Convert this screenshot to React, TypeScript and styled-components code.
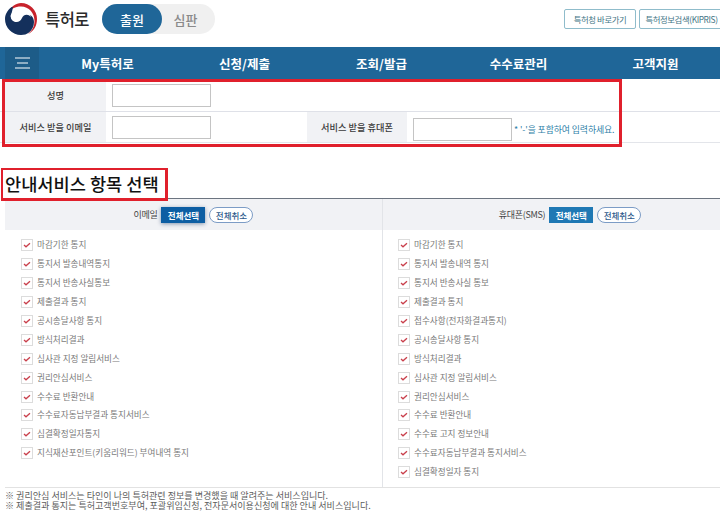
import React from "react";
import styled, { createGlobalStyle } from "styled-components";

const GlobalStyle = createGlobalStyle`
  html, body {
    margin: 0;
    padding: 0;
    background: #fff;
    overflow: hidden;
  }
  * {
    box-sizing: border-box;
  }
  body {
    font-family: "Noto Sans CJK KR", "Noto Sans", sans-serif;
    color: #333;
  }
`;

const Page = styled.div`
  width: 720px;
  height: 518px;
  overflow: hidden;
`;

const Header = styled.header`
  height: 47px;
  display: flex;
  align-items: flex-start;
  padding: 3px 0 0 5px;
`;

const Brand = styled.div`
  display: flex;
  align-items: center;
  gap: 8px;
  width: 97px;
  height: 32px;
  font-size: 16.5px;
  font-weight: 500;
  color: #2b2b2b;
  letter-spacing: -0.5px;
`;

const Toggle = styled.div`
  display: flex;
  width: 113px;
  height: 30px;
  margin-top: 1px;
  border-radius: 15px;
  background: #f0f0f0;
`;

const ToggleItem = styled.div<{ $active?: boolean }>`
  width: ${(p) => (p.$active ? "60px" : "53px")};
  display: flex;
  align-items: center;
  justify-content: center;
  border-radius: 15px;
  font-size: 13px;
  font-weight: 500;
  padding-right: ${(p) => (p.$active ? "0" : "6px")};
  background: ${(p) => (p.$active ? "#1f6698" : "transparent")};
  color: ${(p) => (p.$active ? "#fff" : "#8a8a8a")};
`;

const QuickLinks = styled.div`
  margin-left: auto;
  display: flex;
  gap: 3px;
  padding-top: 6px;
  margin-right: -4px;
`;

const QuickLink = styled.a<{ $w: number }>`
  width: ${(p) => p.$w}px;
  height: 20px;
  display: flex;
  align-items: center;
  justify-content: center;
  border: 1px solid #8fbccb;
  border-radius: 2px;
  font-size: 8.4px;
  letter-spacing: -0.4px;
  color: #3f7585;
  white-space: nowrap;
`;

const Nav = styled.nav`
  height: 32px;
  background: #1f6698;
  display: flex;
  padding-left: 5px;
`;

const MenuButton = styled.div`
  width: 34px;
  flex: none;
  background: #1d5c88;
  display: flex;
  align-items: center;
  justify-content: center;
`;

const NavItem = styled.div`
  width: 137px;
  flex: none;
  display: flex;
  align-items: center;
  justify-content: center;
  color: #fff;
  font-size: 12.5px;
  font-weight: 700;
`;

const FormSection = styled.section`
  position: relative;
  height: 64px;
  border-bottom: 1px solid #e3e5ea;
`;

const FormRow = styled.div<{ $h: number; $line?: boolean }>`
  height: ${(p) => p.$h}px;
  display: flex;
  padding-left: 5px;
  border-bottom: ${(p) => (p.$line ? "1px solid #dfe1e8" : "none")};
`;

const Label = styled.div<{ $w: number }>`
  width: ${(p) => p.$w}px;
  flex: none;
  background: #f1f2f5;
  display: flex;
  align-items: center;
  justify-content: center;
  font-size: 9.2px;
  font-weight: 500;
  color: #3a3a3a;
  white-space: nowrap;
`;

const Field = styled.div<{ $w: number; $drop?: boolean }>`
  width: ${(p) => p.$w}px;
  flex: none;
  display: flex;
  align-items: center;
  padding-left: 6px;
  padding-top: ${(p) => (p.$drop ? "4px" : "0")};
`;

const Input = styled.input`
  width: 99px;
  height: 23px;
  border: 1px solid #c4c4c4;
  background: #fff;
  padding: 0;
  outline: none;
`;

const Hint = styled.span`
  margin-left: 2px;
  font-size: 8.9px;
  letter-spacing: -0.1px;
  color: #2f7fa8;
  white-space: nowrap;
`;

const Highlight = styled.div`
  position: absolute;
  left: 2px;
  top: 0;
  width: 620px;
  height: 68px;
  border: 3px solid #e0202c;
  pointer-events: none;
`;

const TitleRow = styled.div`
  height: 56px;
  padding: 25px 0 0 1px;
`;

const Title = styled.h2`
  display: inline-flex;
  align-items: center;
  width: 167px;
  height: 33px;
  margin: 0;
  padding-left: 2px;
  border: 2px solid #e0202c;
  border-width: 2px 3px 3px 2px;
  background: #fff;
  position: relative;
  font-size: 17.6px;
  font-weight: 500;
  line-height: 1;
  color: #111;
  white-space: nowrap;
`;

const Board = styled.div`
  margin: -1px 0 0 5px;
  width: 752px;
  height: 290px;
  border-top: 1px solid #6c7480;
  border-bottom: 1px solid #e2e2e2;
  display: grid;
  grid-template-columns: 377px 375px;
`;

const Column = styled.div<{ $divided?: boolean }>`
  border-left: ${(p) => (p.$divided ? "1px solid #e2e4e8" : "none")};
`;

const ColumnHead = styled.div`
  height: 31px;
  background: #f1f2f5;
  display: flex;
  align-items: center;
  justify-content: center;
  gap: 3px;
  font-size: 9px;
  color: #444;
`;

const HeadLabel = styled.span`
  letter-spacing: -0.3px;
  margin-right: 1px;
`;

const SelectAll = styled.button<{ $shadow?: boolean }>`
  width: 44px;
  height: 16px;
  border: none;
  padding: 0;
  background: ${(p) => (p.$shadow ? "#0d5ea3" : "#1f78b4")};
  box-shadow: ${(p) => (p.$shadow ? "0 1px 4px rgba(0, 40, 90, 0.45)" : "none")};
  color: #fff;
  font-family: inherit;
  font-size: 8.5px;
  font-weight: 700;
`;

const ClearAll = styled.button`
  width: 44px;
  height: 16px;
  margin-left: 1px;
  border: 1px solid #7c9cc6;
  border-radius: 8px;
  padding: 0;
  background: #fff;
  color: #2e5a8c;
  font-family: inherit;
  font-size: 8.5px;
  font-weight: 500;
`;

const OptionList = styled.ul<{ $indent: number }>`
  list-style: none;
  margin: 0;
  padding: 5px 0 0 ${(p) => p.$indent}px;
`;

const Option = styled.li`
  height: 18.9px;
  display: flex;
  align-items: center;
  gap: 4px;
  font-size: 8.6px;
  color: #7a7a7a;
  white-space: nowrap;
`;

const CheckBox = styled.span`
  width: 12px;
  height: 12px;
  flex: none;
  border: 1px solid #dcdcdc;
  display: flex;
  align-items: center;
  justify-content: center;
  margin-top: 2px;
`;

const Notes = styled.div`
  margin-left: 5px;
  padding-top: 3px;
  font-size: 9.05px;
  line-height: 10px;
  color: #5c5c5c;
  white-space: nowrap;
`;

const Logo = () => (
  <svg width="32" height="32" viewBox="0 0 32 32" aria-hidden="true">
    <path d="M16 0a16 16 0 0 1 16 16c0 7-3.5 12.5-9 15 4-3 6.5-7.5 6.5-13C29.500 10 24 3.500 16 3.500 10 3.500 6 6 3.500 9 6 3.500 11 0 16 0z" fill="#c8232c" />
    <path d="M8.500 3c-5 2.500-8.500 7.500-8.500 13a16 16 0 0 0 16 16c3 0 6-.8 8-2.500 3-2.200 5-6 5-10.500 0-5-3.500-8-7.500-8-3.500 0-5.500 2-6.500 4.500-1 2-2.500 3-4.500 3-2.500 0-4.500-2-4.500-4.500 0-4 2-7 2-11z" fill="#14305c" />
    <path d="M5.500 13c.5 3.500 3 6 6 6 2.500 0 4.200-1.500 5.200-3.500 1-2.300 2.500-3.800 5-3.800 2 0 3.500 1 4.300 2.500-1-5-5-8.200-10-8.200-5 0-9.500 3-10.500 7z" fill="#fff" />
  </svg>
);

const MenuIcon = () => (
  <svg width="15" height="12" viewBox="0 0 15 12" aria-hidden="true">
    <path d="M0 1h15M2 6h11M0 11h15" stroke="#fff" strokeWidth="1" fill="none" />
  </svg>
);

const CheckIcon = () => (
  <svg width="8" height="6" viewBox="0 0 8 6" aria-hidden="true">
    <path d="M1 3l2 1.800L7 1.200" stroke="#c9404c" strokeWidth="1.300" fill="none" />
  </svg>
);

const EMAIL_OPTIONS = [
  "마감기한 통지",
  "통지서 발송내역통지",
  "통지서 반송사실통보",
  "제출결과 통지",
  "공시송달사항 통지",
  "방식처리결과",
  "심사관 지정 알림서비스",
  "권리안심서비스",
  "수수료 반환안내",
  "수수료자동납부결과 통지서비스",
  "심결확정일자통지",
  "지식재산포인트(키움리워드) 부여내역 통지",
];

const SMS_OPTIONS = [
  "마감기한 통지",
  "통지서 발송내역 통지",
  "통지서 반송사실 통보",
  "제출결과 통지",
  "접수사항(전자화결과통지)",
  "공시송달사항 통지",
  "방식처리결과",
  "심사관 지정 알림서비스",
  "권리안심서비스",
  "수수료 반환안내",
  "수수료 고지 정보안내",
  "수수료자동납부결과 통지서비스",
  "심결확정일자 통지",
];

const NAV_ITEMS = ["My특허로", "신청/제출", "조회/발급", "수수료관리", "고객지원"];

const OptionGroup = ({ items, indent }: { items: string[]; indent: number }) => (
  <OptionList $indent={indent}>
    {items.map((item) => (
      <Option key={item}>
        <CheckBox>
          <CheckIcon />
        </CheckBox>
        {item}
      </Option>
    ))}
  </OptionList>
);

const App = () => {
  return (
    <Page>
      <GlobalStyle />
      <Header>
        <Brand>
          <Logo />
          특허로
        </Brand>
        <Toggle>
          <ToggleItem $active>출원</ToggleItem>
          <ToggleItem>심판</ToggleItem>
        </Toggle>
        <QuickLinks>
          <QuickLink $w={72}>특허청 바로가기</QuickLink>
          <QuickLink $w={85}>특허정보검색(KIPRIS)</QuickLink>
        </QuickLinks>
      </Header>

      <Nav>
        <MenuButton>
          <MenuIcon />
        </MenuButton>
        {NAV_ITEMS.map((item) => (
          <NavItem key={item}>{item}</NavItem>
        ))}
      </Nav>

      <FormSection>
        <FormRow $h={33} $line>
          <Label $w={101}>성명</Label>
          <Field $w={201}>
            <Input type="text" />
          </Field>
        </FormRow>
        <FormRow $h={30}>
          <Label $w={101}>서비스 받을 이메일</Label>
          <Field $w={201}>
            <Input type="text" />
          </Field>
          <Label $w={100}>서비스 받을 휴대폰</Label>
          <Field $w={300} $drop>
            <Input type="text" />
            <Hint>* '-'을 포함하여 입력하세요.</Hint>
          </Field>
        </FormRow>
        <Highlight />
      </FormSection>

      <TitleRow>
        <Title>안내서비스 항목 선택</Title>
      </TitleRow>

      <Board>
        <Column>
          <ColumnHead>
            <HeadLabel>이메일</HeadLabel>
            <SelectAll $shadow>전체선택</SelectAll>
            <ClearAll>전체취소</ClearAll>
          </ColumnHead>
          <OptionGroup items={EMAIL_OPTIONS} indent={16} />
        </Column>
        <Column $divided>
          <ColumnHead>
            <HeadLabel>휴대폰(SMS)</HeadLabel>
            <SelectAll>전체선택</SelectAll>
            <ClearAll>전체취소</ClearAll>
          </ColumnHead>
          <OptionGroup items={SMS_OPTIONS} indent={15} />
        </Column>
      </Board>

      <Notes>
        <div>※ 권리안심 서비스는 타인이 나의 특허관련 정보를 변경했을 때 알려주는 서비스입니다.</div>
        <div>※ 제출결과 통지는 특허고객번호부여, 포괄위임신청, 전자문서이용신청에 대한 안내 서비스입니다.</div>
      </Notes>
    </Page>
  );
};

export default App;
